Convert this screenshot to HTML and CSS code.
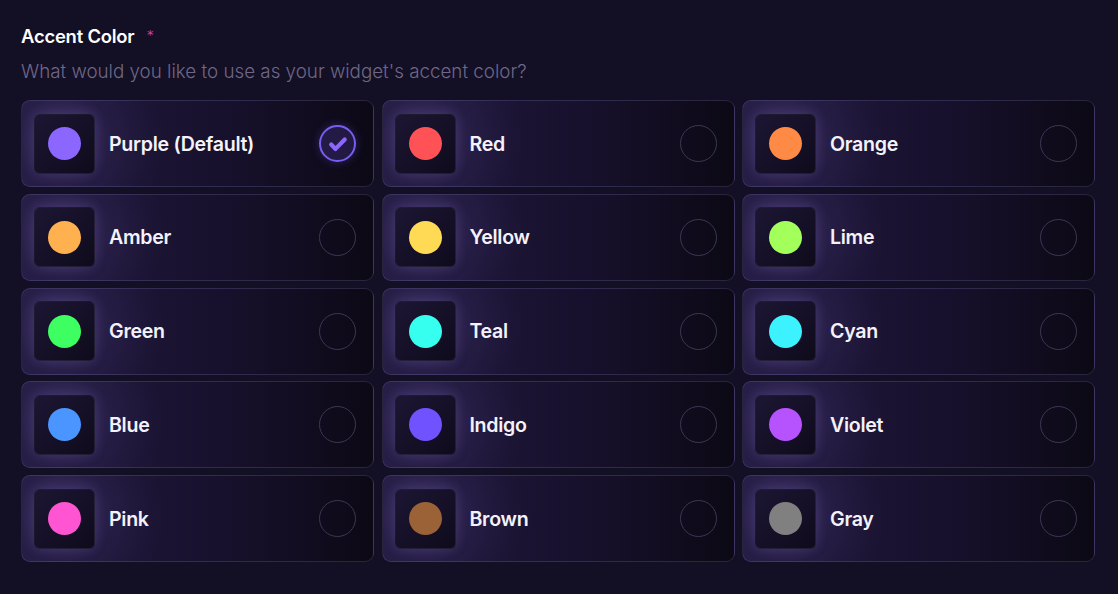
FILE: index.html
```html
<!DOCTYPE html>
<html>
<head>
<meta charset="utf-8">
<link rel="stylesheet" href="styles.css">
</head>
<body>
<div class="field">
  <div class="label">Accent Color <span class="req">*</span></div>
  <div class="hint">What would you like to use as your widget's accent color?</div>
  <div class="grid">
    <div class="card selected"><div class="swatch"><span class="dot" style="background:#8b66ff"></span></div><div class="name">Purple (Default)</div><div class="radio"><svg viewBox="0 0 24 24" width="24" height="24"><path d="M5.2 12.6l4.3 4.3 9.2-9.4" fill="none" stroke="#8b66ff" stroke-width="4.2" stroke-linecap="round" stroke-linejoin="round"/></svg></div></div>
    <div class="card"><div class="swatch"><span class="dot" style="background:#ff5257"></span></div><div class="name">Red</div><div class="radio"></div></div>
    <div class="card"><div class="swatch"><span class="dot" style="background:#ff8a45"></span></div><div class="name">Orange</div><div class="radio"></div></div>
    <div class="card"><div class="swatch"><span class="dot" style="background:#ffb04f"></span></div><div class="name">Amber</div><div class="radio"></div></div>
    <div class="card"><div class="swatch"><span class="dot" style="background:#ffdb55"></span></div><div class="name">Yellow</div><div class="radio"></div></div>
    <div class="card"><div class="swatch"><span class="dot" style="background:#a3ff5a"></span></div><div class="name">Lime</div><div class="radio"></div></div>
    <div class="card"><div class="swatch"><span class="dot" style="background:#3dff62"></span></div><div class="name">Green</div><div class="radio"></div></div>
    <div class="card"><div class="swatch"><span class="dot" style="background:#36fff0"></span></div><div class="name">Teal</div><div class="radio"></div></div>
    <div class="card"><div class="swatch"><span class="dot" style="background:#3cf2ff"></span></div><div class="name">Cyan</div><div class="radio"></div></div>
    <div class="card"><div class="swatch"><span class="dot" style="background:#4a95ff"></span></div><div class="name">Blue</div><div class="radio"></div></div>
    <div class="card"><div class="swatch"><span class="dot" style="background:#7052ff"></span></div><div class="name">Indigo</div><div class="radio"></div></div>
    <div class="card"><div class="swatch"><span class="dot" style="background:#b653ff"></span></div><div class="name">Violet</div><div class="radio"></div></div>
    <div class="card"><div class="swatch"><span class="dot" style="background:#ff55d2"></span></div><div class="name">Pink</div><div class="radio"></div></div>
    <div class="card"><div class="swatch"><span class="dot" style="background:#9a6236"></span></div><div class="name">Brown</div><div class="radio"></div></div>
    <div class="card"><div class="swatch"><span class="dot" style="background:#808080"></span></div><div class="name">Gray</div><div class="radio"></div></div>
  </div>
</div>
</body>
</html>
```
FILE: styles.css
```css
html, body {
  margin: 0;
  padding: 0;
  background: #130f25;
  font-family: Inter, "Liberation Sans", sans-serif;
  color: #fff;
}
.field {
  padding: 24px 23px 0 21px;
}
.label {
  font-size: 18.4px;
  font-weight: 600;
  line-height: 22px;
  letter-spacing: -0.2px;
}
.req {
  color: #d43fb4;
  font-family: "DejaVu Sans", sans-serif;
  font-weight: 400;
  font-size: 13px;
  margin-left: 8px;
  vertical-align: 4px;
}
.hint {
  margin-top: 14px;
  font-size: 18.8px;
  line-height: 22px;
  color: #6f6787;
  font-weight: 300;
  letter-spacing: 0;
}
.grid {
  margin-top: 17px;
  display: grid;
  grid-template-columns: repeat(3, 353px);
  grid-auto-rows: 87px;
  column-gap: 7.5px;
  row-gap: 6.8px;
}
.card {
  box-sizing: border-box;
  border: 1px solid rgba(140, 125, 190, 0.24);
  border-radius: 9px;
  background:
    radial-gradient(circle at 42px 38px, rgba(130, 110, 200, 0.34) 0, rgba(95, 75, 165, 0.14) 48px, rgba(0,0,0,0) 100px),
    linear-gradient(90deg, #1f1839 0%, #18112e 55%, #0c0915 100%);
  display: flex;
  align-items: center;
  padding: 0 17px 0 12px;
}
.swatch {
  width: 61px;
  height: 60px;
  box-sizing: border-box;
  border-radius: 6px;
  background: linear-gradient(135deg, #1c1633 0%, #0f0b1c 100%);
  border: 1px solid rgba(255, 255, 255, 0.05);
  display: flex;
  align-items: center;
  justify-content: center;
  flex-shrink: 0;
  box-shadow: 0 0 12px rgba(130, 110, 200, 0.25);
}
.dot {
  width: 33px;
  height: 33px;
  border-radius: 50%;
  display: block;
}
.name {
  flex: 1;
  margin-left: 14px;
  font-size: 19.6px;
  font-weight: 600;
  letter-spacing: -0.3px;
  color: #f4f2fa;
}
.radio {
  width: 37px;
  height: 37px;
  box-sizing: border-box;
  border-radius: 50%;
  border: 1.6px solid #3d3753;
  display: flex;
  align-items: center;
  justify-content: center;
  flex-shrink: 0;
}
.selected .radio {
  border: 2px solid #7b5cf0;
  background: rgba(110, 80, 220, 0.22);
  box-shadow: 0 0 10px rgba(120, 90, 255, 0.3);
}
```
